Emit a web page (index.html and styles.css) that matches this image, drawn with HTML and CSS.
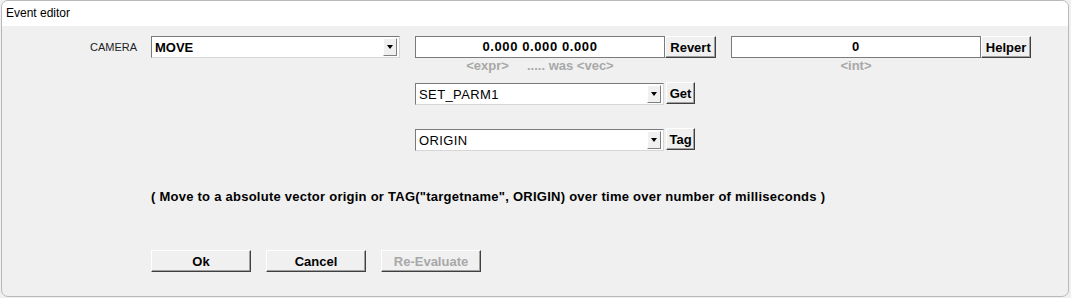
FILE: index.html
```html
<!DOCTYPE html>
<html lang="en">
<head>
    <meta charset="UTF-8">
    <meta name="viewport" content="width=device-width, initial-scale=1.0">
    <title>Event editor</title>
    <link rel="stylesheet" href="styles.css">
</head>
<body>
    <div class="window">
        <div class="titlebar">Event editor</div>
        <div class="content">
            <div class="row first">
                <div class="label-col">CAMERA</div>
                <div class="combo wide bold">
                    <span class="combo-text">MOVE</span>
                    <span class="arrow"></span>
                </div>
                <div class="field-group">
                    <div class="field-line">
                        <div class="field">0.000 0.000 0.000</div>
                        <button class="btn small revert">Revert</button>
                    </div>
                    <div class="hint">&lt;expr&gt; &nbsp;&nbsp;&nbsp;&nbsp;..... was &lt;vec&gt;</div>
                </div>
                <div class="field-group">
                    <div class="field-line">
                        <div class="field">0</div>
                        <button class="btn small helper">Helper</button>
                    </div>
                    <div class="hint">&lt;int&gt;</div>
                </div>
            </div>

            <div class="row sub second">
                <div class="combo">
                    <span class="combo-text">SET_PARM1</span>
                    <span class="arrow"></span>
                </div>
                <button class="btn small side">Get</button>
            </div>

            <div class="row sub third">
                <div class="combo">
                    <span class="combo-text">ORIGIN</span>
                    <span class="arrow"></span>
                </div>
                <button class="btn small side">Tag</button>
            </div>

            <p class="description">( Move to a absolute vector origin or TAG("targetname", ORIGIN) over time over number of milliseconds )</p>

            <div class="row actions">
                <button class="btn action">Ok</button>
                <button class="btn action">Cancel</button>
                <button class="btn action disabled">Re-Evaluate</button>
            </div>
        </div>
    </div>
</body>
</html>
```

FILE: styles.css
```css
body {
    margin: 0;
    padding: 0;
    background-color: #f0f0f0;
    font-family: "Liberation Sans", Arial, sans-serif;
    color: #000;
}
.window {
    margin-left: 1px;
    width: 1066px;
    height: 295px;
    border: 1px solid #b9b9b9;
    border-radius: 7px;
    overflow: hidden;
    background-color: #f0f0f0;
}
.titlebar {
    height: 25px;
    background-color: #fff;
    font-size: 12px;
    line-height: 25px;
    padding-left: 4px;
}
.content {
    padding-top: 10px;
}
.row {
    display: flex;
    align-items: flex-start;
}
.label-col {
    width: 149px;
    box-sizing: border-box;
    padding-right: 14px;
    text-align: right;
    font-size: 11px;
    line-height: 22px;
    color: #222;
}
.combo {
    display: flex;
    align-items: center;
    width: 249px;
    height: 22px;
    box-sizing: border-box;
    border: 1px solid;
    border-color: #7a7a7a #d6d6d6 #d6d6d6 #7a7a7a;
    background-color: #fff;
    padding: 1px 2px 1px 3px;
    font-size: 13px;
    letter-spacing: 0.4px;
}
.combo.wide {
    margin-right: 15px;
}
.combo.bold {
    font-weight: bold;
    letter-spacing: 0;
}
.combo-text {
    flex: 1;
}
.arrow {
    width: 14px;
    height: 18px;
    box-sizing: border-box;
    border: 1px solid;
    border-color: #fff #808080 #808080 #fff;
    background-color: #f0f0f0;
    display: flex;
    align-items: center;
    justify-content: center;
}
.arrow::after {
    content: "";
    border-left: 3px solid transparent;
    border-right: 3px solid transparent;
    border-top: 4px solid #000;
}
.field-group {
    display: flex;
    flex-direction: column;
    margin-right: 15px;
}
.field-line {
    display: flex;
}
.field {
    width: 250px;
    height: 22px;
    box-sizing: border-box;
    border: 1px solid #7a7a7a;
    background-color: #fff;
    text-align: center;
    font-size: 13px;
    font-weight: bold;
    letter-spacing: 0.6px;
    line-height: 19px;
}
.hint {
    width: 250px;
    text-align: center;
    font-size: 13px;
    font-weight: bold;
    color: #a8a8a8;
    line-height: 16px;
}
.btn {
    font-family: "Liberation Sans", Arial, sans-serif;
    font-weight: bold;
    font-size: 13px;
    color: #000;
    background-color: #f0f0f0;
    border: 1px solid;
    border-color: #fff #404040 #404040 #fff;
    box-shadow: inset -1px -1px 0 #a0a0a0;
    padding: 0;
    height: 22px;
    box-sizing: border-box;
    cursor: pointer;
}
.revert {
    width: 51px;
}
.helper {
    width: 50px;
}
.sub {
    padding-left: 413px;
}
.second {
    margin-top: 9px;
}
.third {
    margin-top: 24px;
}
.side {
    width: 29px;
    margin-left: 2px;
    margin-top: -1px;
}
.description {
    margin: 39px 0 0 149px;
    font-size: 13px;
    font-weight: bold;
    letter-spacing: 0.25px;
    line-height: 14px;
}
.actions {
    margin-top: 46px;
    padding-left: 149px;
    gap: 15px;
}
.action {
    width: 100px;
    height: 22px;
}
.disabled {
    color: #a8a8a8;
    cursor: default;
}
```
